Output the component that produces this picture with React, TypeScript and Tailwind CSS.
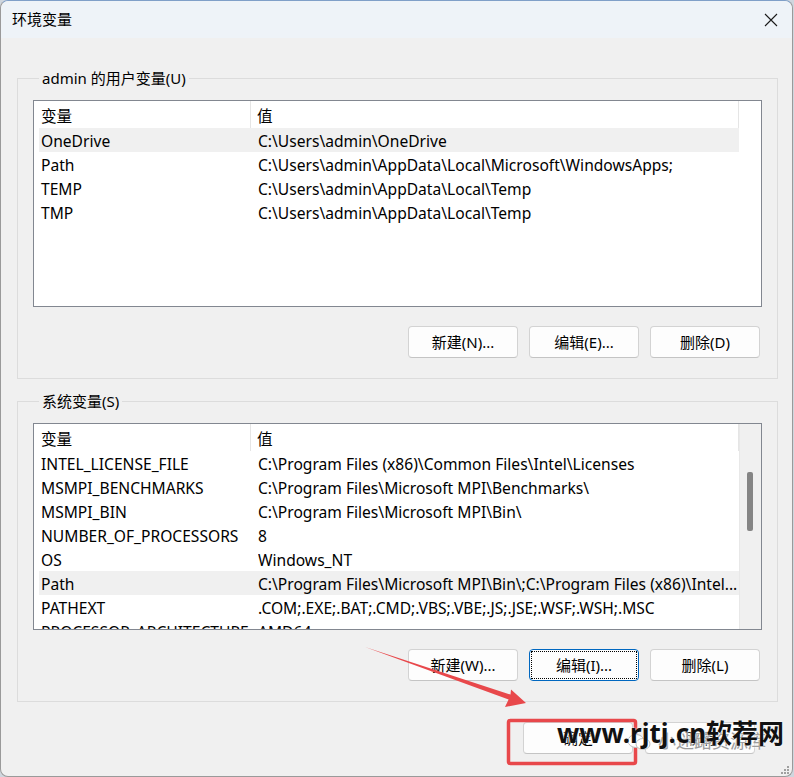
import React from 'react';

type Row = { name: string; value: string; selected?: boolean };

const userVars: Row[] = [
  { name: 'OneDrive', value: 'C:\\Users\\admin\\OneDrive', selected: true },
  { name: 'Path', value: 'C:\\Users\\admin\\AppData\\Local\\Microsoft\\WindowsApps;' },
  { name: 'TEMP', value: 'C:\\Users\\admin\\AppData\\Local\\Temp' },
  { name: 'TMP', value: 'C:\\Users\\admin\\AppData\\Local\\Temp' },
];

const sysVars: Row[] = [
  { name: 'INTEL_LICENSE_FILE', value: 'C:\\Program Files (x86)\\Common Files\\Intel\\Licenses' },
  { name: 'MSMPI_BENCHMARKS', value: 'C:\\Program Files\\Microsoft MPI\\Benchmarks\\' },
  { name: 'MSMPI_BIN', value: 'C:\\Program Files\\Microsoft MPI\\Bin\\' },
  { name: 'NUMBER_OF_PROCESSORS', value: '8' },
  { name: 'OS', value: 'Windows_NT' },
  { name: 'Path', value: 'C:\\Program Files\\Microsoft MPI\\Bin\\;C:\\Program Files (x86)\\Intel...', selected: true },
  { name: 'PATHEXT', value: '.COM;.EXE;.BAT;.CMD;.VBS;.VBE;.JS;.JSE;.WSF;.WSH;.MSC' },
  { name: 'PROCESSOR_ARCHITECTURE', value: 'AMD64' },
];

function WinButton({ label, focused }: { label: string; focused?: boolean }) {
  if (focused) {
    return (
      <div className="w-[110px] h-[32px] rounded-[4px] border border-[#0067c0] bg-[#fdfdfd] p-[1px]">
        <div className="w-full h-full border border-dotted border-black flex items-center justify-center text-[15px] text-black">
          {label}
        </div>
      </div>
    );
  }
  return (
    <div className="w-[110px] h-[32px] rounded-[4px] border border-[#d3d3d3] border-b-[#c4c4c4] bg-[#fdfdfd] flex items-center justify-center text-[15px] text-black">
      {label}
    </div>
  );
}

function VarList({ rows, scrollbar }: { rows: Row[]; scrollbar?: boolean }) {
  return (
    <div className="w-[729px] h-[207px] border border-[#828790] bg-white flex overflow-hidden text-[15.6px]">
      <div className="w-[705px] flex flex-col">
        {/* header */}
        <div className="h-[27px] flex shrink-0 items-center">
          <div className="w-[217px] h-full pl-[7px] pt-[5px] flex items-center border-r border-[#e5e5e5]">变量</div>
          <div className="w-[488px] h-full pl-[6px] pt-[5px] flex items-center border-r border-[#e5e5e5]">值</div>
        </div>
        {rows.map((r) => (
          <div
            key={r.name}
            className={`ml-[5px] w-[700px] h-[24px] pt-[3px] shrink-0 flex items-center whitespace-nowrap ${r.selected ? 'bg-[#f0f0f0]' : ''}`}
          >
            <div className="w-[219px] pl-[2px] overflow-hidden">{r.name}</div>
            <div className="flex-1 overflow-hidden">{r.value}</div>
          </div>
        ))}
      </div>
      {scrollbar ? (
        <div className="w-[22px] h-full bg-[#f0f0f0] border-l border-[#e8e8e8] pt-[48px] pl-[7px]">
          <div className="w-[6px] h-[59px] bg-[#858585] rounded-[2px]" />
        </div>
      ) : (
        <div className="w-[22px]" />
      )}
    </div>
  );
}

function Group({ title, rows, buttons, scrollbar }: { title: string; rows: Row[]; buttons: [string, boolean?][]; scrollbar?: boolean }) {
  return (
    <fieldset className="w-[761px] border border-[#dcdcdc] pl-[15px] pb-[20px]">
      <legend className="ml-[6px] px-[3px] leading-[20px] text-[15px]">{title}</legend>
      <div className="mt-[12px]">
        <VarList rows={rows} scrollbar={scrollbar} />
      </div>
      <div className="mt-[19px] mr-[17px] flex justify-end gap-[11px]">
        {buttons.map(([b, f]) => (
          <WinButton key={b} label={b} focused={f} />
        ))}
      </div>
    </fieldset>
  );
}

export default function App() {
  return (
    <div
      className="relative w-[794px] h-[777px] overflow-hidden bg-[#cfd6de] text-[15px] text-black"
      style={{ fontFamily: '"Noto Sans", "Noto Sans CJK SC", sans-serif' }}
    >
      <div className="w-[793px] h-[777px] bg-[#f0f0f0] border border-[#9a9a9a] border-t-[#7f9fc8] rounded-lg flex flex-col">
        {/* title bar */}
        <div className="h-[37px] shrink-0 bg-[#eef3f8] rounded-t-lg flex items-center justify-between pl-[11px] pr-[14px]">
          <span className="text-[15px]">环境变量</span>
          <svg width="14" height="14" viewBox="0 0 14 14">
            <path d="M1 1 L13 13 M13 1 L1 13" stroke="#1a1a1a" strokeWidth="1.1" />
          </svg>
        </div>

        <div className="pl-[16px] pt-[30px] flex flex-col gap-[12px]">
          <Group
            title="admin 的用户变量(U)"
            rows={userVars}
            buttons={[['新建(N)...'], ['编辑(E)...'], ['删除(D)']]}
          />
          <Group
            title="系统变量(S)"
            rows={sysVars}
            scrollbar
            buttons={[['新建(W)...'], ['编辑(I)...', true], ['删除(L)']]}
          />
        </div>

        <div className="mt-[20px] pr-[37px] flex justify-end gap-[12px]">
          <WinButton label="确定" />
          <WinButton label="取消" />
        </div>
      </div>

      {/* resize grip */}
      <div className="absolute right-[5px] bottom-[3px] grid grid-cols-3 gap-[1px]">
        {[0, 0, 1, 0, 1, 1, 1, 1, 1].map((v, i) => (
          <div key={i} className={`w-[2px] h-[2px] ${v ? 'bg-[#a0a0a0]' : ''}`} />
        ))}
      </div>

      {/* annotation: arrow + red box */}
      <svg className="absolute left-0 top-0 pointer-events-none" width="794" height="777">
        <polygon points="365,647 510.5,694.6 511,689.5 526,703 505,707 508.6,699.6" fill="#e8484b" />
        <rect x="508.5" y="720.5" width="127" height="43" rx="2" fill="none" stroke="#e8484b" strokeWidth="3.5" />
      </svg>

      {/* watermark */}
      <div className="absolute left-[626px] top-[728px] flex items-center gap-[6px] whitespace-nowrap pointer-events-none">
        <svg width="26" height="20" viewBox="0 0 26 20">
          <ellipse cx="10" cy="9" rx="8" ry="6.5" fill="white" stroke="#bdbdbd" strokeWidth="1" />
          <ellipse cx="17" cy="12" rx="7" ry="5.5" fill="white" stroke="#bdbdbd" strokeWidth="1" />
          <circle cx="7.5" cy="8" r="1" fill="#c03a3a" />
        </svg>
        <span className="text-[18px] text-[#9c9c9c]" style={{ textShadow: '0 0 2px #fff, 0 0 2px #fff' }}>小迷路资源库</span>
      </div>
      <div
        className="absolute left-[557px] top-[716px] whitespace-nowrap pointer-events-none text-[26px] font-bold leading-[34px] text-[#111]"
        style={{ textShadow: '0 0 2px #fff' }}
      >
        www.rjtj.cn软荐网
      </div>
    </div>
  );
}
